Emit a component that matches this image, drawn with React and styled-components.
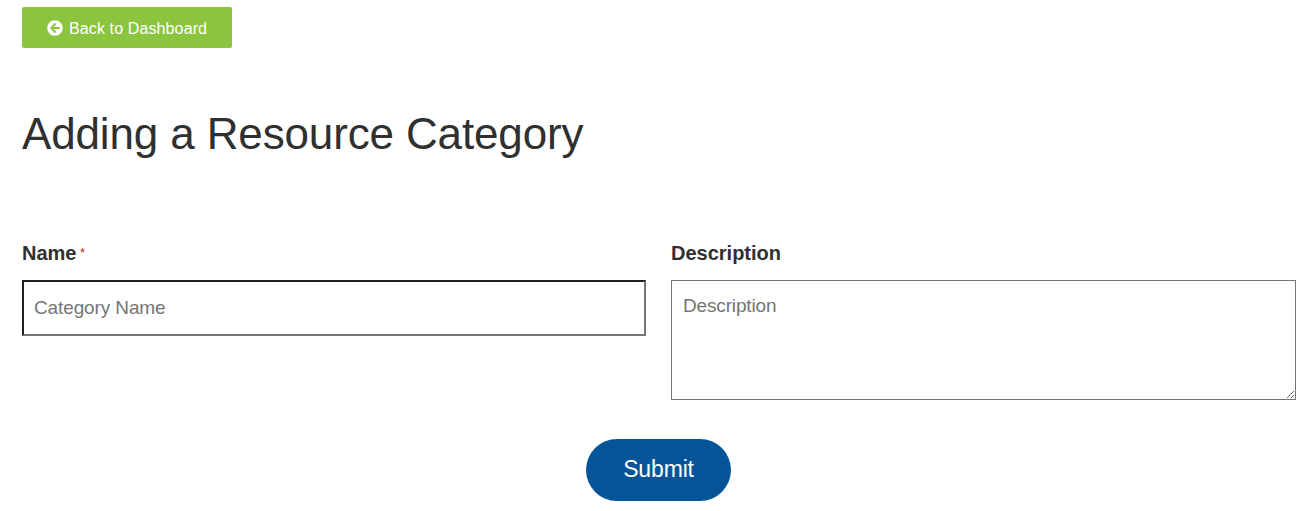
import React from 'react';
import styled, { createGlobalStyle } from 'styled-components';
import { FaArrowCircleLeft } from 'react-icons/fa';


const AddCategory = () => {
    return (
        <Page>
            <GlobalStyle />
            <BackLink href="#">
                <FaArrowCircleLeft />
                <span>Back to Dashboard</span>
            </BackLink>
            <Title>Adding a Resource Category</Title>
            <Form onSubmit={(e) => e.preventDefault()}>
                <Fields>
                    <Field>
                        <Label htmlFor="name">Name<Required>*</Required></Label>
                        <Input id="name" type="text" placeholder="Category Name" />
                    </Field>
                    <Field>
                        <Label htmlFor="description">Description</Label>
                        <TextArea id="description" placeholder="Description" />
                    </Field>
                </Fields>
                <Submit type="submit">Submit</Submit>
            </Form>
        </Page>
    );
};

const GlobalStyle = createGlobalStyle`
    * {
        box-sizing: border-box;
        margin: 0;
        padding: 0;
    }

    body {
        background: #fff;
        color: #303030;
        font-family: "Liberation Sans", Arial, sans-serif;
        overflow: hidden;
    }
`

const Page = styled.main`
    display: flex;
    flex-direction: column;
    align-items: flex-start;
    padding: 7px 16px 0 22px;
`

const BackLink = styled.a`
    display: flex;
    align-items: center;
    gap: 6.5px;
    width: 210px;
    height: 41px;
    padding-left: 24.5px;
    border-radius: 2px;
    background: #8bc540;
    color: white;
    font-size: 16px;
    letter-spacing: 0.12px;
    text-decoration: none;

    span {
        padding-top: 2px;
    }
`

const Title = styled.h1`
    margin-top: 60px;
    font-size: 44px;
    font-weight: 400;
    letter-spacing: -0.14px;
    line-height: 52px;
    white-space: nowrap;
`

const Form = styled.form`
    display: flex;
    flex-direction: column;
    align-items: center;
    width: 100%;
    margin-top: 80px;
`

const Fields = styled.div`
    display: grid;
    grid-template-columns: 624px 625px;
    column-gap: 25px;
    width: 100%;
`

const Field = styled.div`
    display: flex;
    flex-direction: column;
`

const Label = styled.label`
    display: flex;
    height: 40px;
    font-size: 20px;
    font-weight: 700;
    line-height: 26px;
`

const Required = styled.span`
    margin-left: 3.5px;
    color: #c02b0a;
    font-size: 13px;
    font-weight: 400;
    line-height: 25px;
`

const Input = styled.input`
    height: 56px;
    padding: 0 10px;
    border: 2px inset #767676;
    font-family: inherit;
    font-size: 19px;
    letter-spacing: -0.12px;

    &::placeholder {
        color: #757575;
    }
`

const TextArea = styled.textarea`
    height: 120px;
    padding: 12px 11px;
    border: 1px solid #767676;
    font-family: inherit;
    font-size: 19px;
    letter-spacing: -0.15px;
    line-height: 26px;
    resize: both;

    &::placeholder {
        color: #757575;
    }
`

const Submit = styled.button`
    width: 145px;
    height: 62px;
    margin: 39px 2px 0 0;
    padding: 0 0 2px 1px;
    border: 0;
    border-radius: 31px;
    background: #045598;
    color: white;
    font-family: inherit;
    font-size: 23px;
    letter-spacing: -0.15px;
`

export default AddCategory;
